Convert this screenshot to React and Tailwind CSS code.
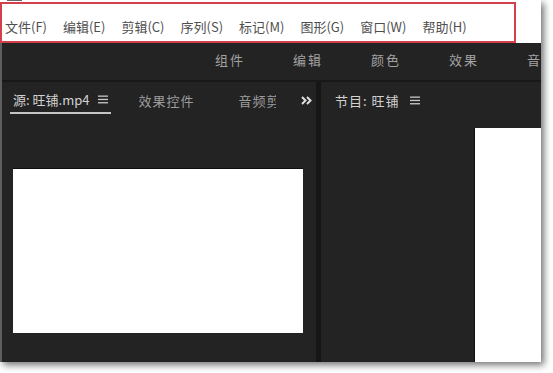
import React from "react";

const menus = ["文件(F)", "编辑(E)", "剪辑(C)", "序列(S)", "标记(M)", "图形(G)", "窗口(W)", "帮助(H)"];
const workspaces = ["组件", "编辑", "颜色", "效果", "音频"];

function MenuIcon() {
  return (
    <svg width="10" height="9" viewBox="0 0 10 9" className="shrink-0">
      <rect x="0" y="0.5" width="10" height="1.3" fill="#c8c8c8" />
      <rect x="0" y="3.8" width="10" height="1.3" fill="#c8c8c8" />
      <rect x="0" y="7.1" width="10" height="1.3" fill="#c8c8c8" />
    </svg>
  );
}

function Chevrons() {
  return (
    <svg width="11" height="9" viewBox="0 0 11 9">
      <path d="M1 1 L4.5 4.5 L1 8" stroke="#e0e0e0" strokeWidth="2" fill="none" />
      <path d="M6 1 L9.5 4.5 L6 8" stroke="#e0e0e0" strokeWidth="2" fill="none" />
    </svg>
  );
}

export default function App() {
  return (
    <div className="relative w-[553px] h-[373px] bg-white overflow-hidden font-['Noto_Sans_CJK_SC',sans-serif]">
      <div className="flex flex-col w-[541px] h-[362px] shadow-[3px_3px_7px_rgba(0,0,0,0.55)]">
        {/* menu bar */}
        <div className="h-[43px] bg-white flex items-center pt-[9px] pl-[5px] gap-[16px] text-[13px] text-[#4f4f4f] shrink-0">
          {menus.map((m) => (
            <span key={m} className="whitespace-nowrap leading-none">{m}</span>
          ))}
        </div>

        <div className="flex-1 flex flex-col bg-[#232323] border-l-2 border-[#5e5e5e] overflow-hidden">
          {/* workspaces */}
          <div className="h-[37px] flex items-center pb-[4px] pl-[213px] shrink-0 overflow-hidden">
            {workspaces.map((w) => (
              <span key={w} className="w-[78px] shrink-0 text-[13px] tracking-[2px] text-[#a2a2a2] leading-none">
                {w}
              </span>
            ))}
          </div>
          <div className="h-[2px] bg-[#181818] shrink-0" />

          {/* panels */}
          <div className="flex-1 flex">
            <div className="w-[314px] flex flex-col">
              <div className="h-[34px] flex items-start pl-[8px] text-[13px] leading-none">
                <div className="h-[32px] flex items-center gap-[9px] pt-[5px] px-[3px] border-b-2 border-[#c4c4c4]">
                  <span className="text-[#d2d2d2] whitespace-nowrap">源: 旺铺.mp4</span>
                  <MenuIcon />
                </div>
                <div className="h-[32px] flex items-center pt-[5px] ml-[27px] text-[#9d9d9d] tracking-[1px]">效果控件</div>
                <div className="h-[32px] flex items-center pt-[5px] ml-[44px] w-[38px] overflow-hidden text-[#9d9d9d] tracking-[1px] whitespace-nowrap">
                  音频剪辑器
                </div>
                <div className="h-[32px] flex items-center pt-[5px] ml-auto mr-[4px]">
                  <Chevrons />
                </div>
              </div>
              <div className="ml-[11px] mt-[52px] w-[290px] h-[165px] bg-white border-t border-[#0e0e0e]" />
            </div>

            <div className="w-[5px] bg-[#161616]" />

            <div className="flex-1 flex flex-col">
              <div className="h-[34px] flex items-start pl-[14px] text-[13px] leading-none">
                <div className="h-[32px] flex items-center gap-[10px] pt-[5px]">
                  <span className="text-[#d2d2d2] tracking-[1px] whitespace-nowrap">节目: 旺铺</span>
                  <MenuIcon />
                </div>
              </div>
              <div className="mt-[12px] ml-auto w-[67px] flex-1 bg-white border-l border-[#111]" />
            </div>
          </div>
        </div>
      </div>

      {/* annotation rectangle */}
      <div className="absolute left-0 top-[2px] w-[516px] h-[41px] border-2 border-[#d43f4b]" />
      <div className="absolute left-[7px] top-0 w-[15px] h-[1px] bg-[#666]" />
    </div>
  );
}
